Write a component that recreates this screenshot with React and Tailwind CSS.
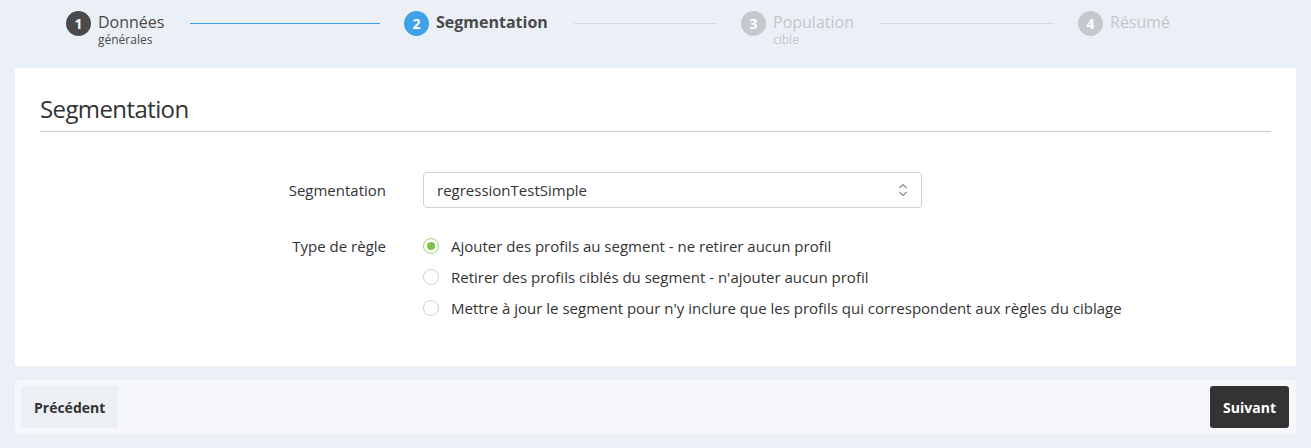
import React from "react";

const font = { fontFamily: '"Open Sans", "Liberation Sans", sans-serif' };

function StepCircle({ n, tone }) {
  const bg =
    tone === "done" ? "bg-[#4a4a4a]" : tone === "active" ? "bg-[#3fa1e8]" : "bg-[#c5c8cc]";
  return (
    <div
      className={`flex h-[25px] w-[25px] shrink-0 items-center justify-center rounded-full text-[14px] font-bold leading-none text-white ${bg}`}
    >
      {n}
    </div>
  );
}

function Step({ n, title, sub, tone }) {
  const titleCls =
    tone === "active"
      ? "font-bold text-[#4a4a4a]"
      : tone === "done"
      ? "text-[#4a4a4a]"
      : "text-[#c3c6ca]";
  const subCls = tone === "done" ? "text-[#4a4a4a]" : "text-[#c3c6ca]";
  return (
    <div className="flex shrink-0 items-start gap-[7px]">
      <StepCircle n={n} tone={tone} />
      <div className="flex flex-col">
        <span className={`text-[16px] leading-[22px] ${titleCls}`}>{title}</span>
        {sub && <span className={`-mt-[1px] text-[12px] leading-[16px] ${subCls}`}>{sub}</span>}
      </div>
    </div>
  );
}

function Line({ active }) {
  return (
    <div
      className={`ml-[26px] mr-[24px] mt-[12px] h-px flex-1 ${active ? "bg-[#3a9ff0]" : "bg-[#d6d9dd]"}`}
    />
  );
}

function Radio({ checked, label }) {
  return (
    <label className="flex h-[20px] items-center gap-[12px] text-[15px] leading-[20px] text-[#333]">
      <span
        className={`flex h-[16px] w-[16px] shrink-0 items-center justify-center rounded-full border bg-white ${
          checked ? "border-[#9fd27a]" : "border-[#cfd2d6]"
        }`}
      >
        {checked && <span className="h-[8px] w-[8px] rounded-full bg-[#7dc242]" />}
      </span>
      <span>{label}</span>
    </label>
  );
}

function Chevrons() {
  return (
    <svg width="10" height="16" viewBox="0 0 10 16" fill="none" stroke="#8a8d91" strokeWidth="1.2">
      <path d="M1.5 6 L5 2.5 L8.5 6" />
      <path d="M1.5 10 L5 13.5 L8.5 10" />
    </svg>
  );
}

export default function App() {
  return (
    <div className="min-h-[448px] bg-[#ebf0f7] pb-[13px]" style={font}>
      {/* wizard steps */}
      <div className="flex h-[68px] items-start pl-[66px] pt-[11px]">
        <div className="flex w-[338px] items-start">
          <Step n="1" title="Données" sub="générales" tone="done" />
          <Line active />
        </div>
        <div className="flex w-[337px] items-start">
          <Step n="2" title="Segmentation" tone="active" />
          <Line />
        </div>
        <div className="flex w-[337px] items-start">
          <Step n="3" title="Population" sub="cible" tone="todo" />
          <Line />
        </div>
        <Step n="4" title="Résumé" tone="todo" />
      </div>

      {/* main card */}
      <div className="mx-[15px] rounded-[3px] bg-white px-[25px] pb-[48px] pt-[24px]">
        <h2 className="border-b border-[#c9cbce] pb-[6px] text-[24px] font-normal leading-[33px] tracking-[-0.6px] text-[#333]">
          Segmentation
        </h2>

        <div className="mt-[40px] flex items-center">
          <div className="w-[346px] text-right text-[15px] text-[#333]">Segmentation</div>
          <div className="ml-[37px] flex h-[36px] w-[499px] items-center justify-between rounded-[4px] border border-[#cfd2d6] pl-[13px] pr-[13px] text-[15px] text-[#333]">
            <span>regressionTestSimple</span>
            <Chevrons />
          </div>
        </div>

        <div className="mt-[28px] flex items-start">
          <div className="h-[20px] w-[346px] text-right text-[15px] leading-[20px] text-[#333]">
            Type de règle
          </div>
          <div className="ml-[37px] flex flex-col gap-[11px]">
            <Radio checked label="Ajouter des profils au segment - ne retirer aucun profil" />
            <Radio label="Retirer des profils ciblés du segment - n'ajouter aucun profil" />
            <Radio label="Mettre à jour le segment pour n'y inclure que les profils qui correspondent aux règles du ciblage" />
          </div>
        </div>
      </div>

      {/* navigation footer */}
      <div className="mx-[15px] mt-[14px] flex items-center justify-between rounded-[3px] bg-[#f5f7fa] px-[6px] py-[6px]">
        <button className="h-[42px] rounded-[3px] bg-[#eceff3] px-[13px] text-[14px] font-bold text-[#333]">
          Précédent
        </button>
        <button className="mr-px h-[42px] rounded-[3px] bg-[#333] px-[13px] text-[14px] font-bold text-white">
          Suivant
        </button>
      </div>
    </div>
  );
}
